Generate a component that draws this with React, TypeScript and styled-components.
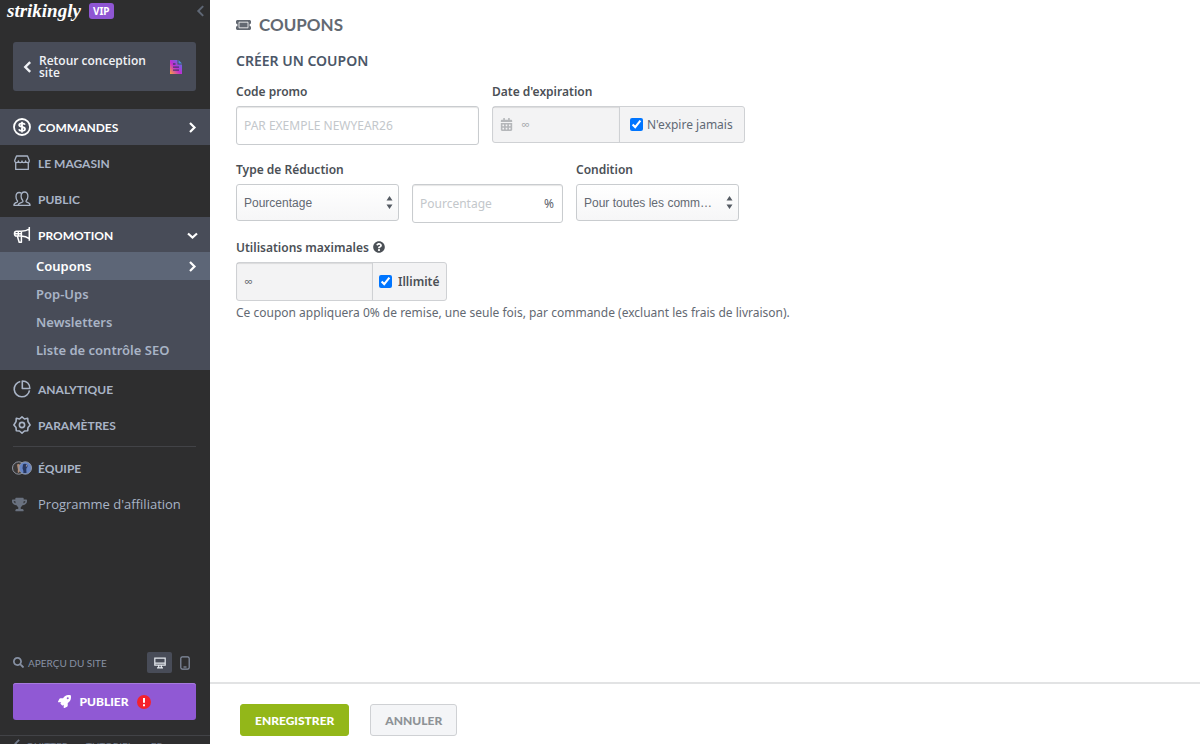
import React from 'react';
import styled, { createGlobalStyle, css } from 'styled-components';
import { FaSearch, FaTrophy, FaRocket, FaQuestionCircle, FaCalendarAlt } from 'react-icons/fa';

const GlobalStyle = createGlobalStyle`
  *, *::before, *::after { box-sizing: border-box; }
  body { margin: 0; background: #fff; color: #4b5056; font-family: 'Noto Sans', sans-serif; font-size: 12px; }
  button, input, select { font: inherit; margin: 0; }
  a { color: inherit; text-decoration: none; }
  svg { display: block; flex: none; }
`;

const brand = css`font-family: Lato, sans-serif;`;

/* ---------- layout ---------- */

const Shell = styled.div`
  display: flex;
  height: 100vh;
  overflow: hidden;
`;

const Sidebar = styled.aside`
  display: flex;
  flex: none;
  flex-direction: column;
  width: 210px;
  background: #2e2e2f;
  color: #a9b4c6;
`;

const Main = styled.main`
  display: flex;
  flex: 1;
  flex-direction: column;
  min-width: 0;
`;

/* ---------- sidebar ---------- */

const SidebarHeader = styled.header`
  display: flex;
  align-items: center;
  height: 22px;
  padding: 0 3px 0 7px;
`;

const Logo = styled.a`
  color: #fff;
  font: italic 700 19px/20px 'Liberation Serif', serif;
`;

const VipBadge = styled.span`
  margin-left: 8px;
  padding: 0 4px;
  border-radius: 3px;
  background: #8f56d3;
  color: #fff;
  font-size: 10px;
  font-weight: 700;
  line-height: 16px;
`;

const CollapseButton = styled.button`
  margin-left: auto;
  padding: 0;
  border: 0;
  background: none;
  color: #5f6775;
`;

const BackLink = styled.a`
  display: flex;
  align-items: center;
  height: 49px;
  margin: 20px 14px 18px 13px;
  padding: 0 14px 0 9px;
  border-radius: 3px;
  background: #484c58;
  color: #f0f2f6;
  font-family: 'Open Sans', sans-serif;
  font-size: 12px;
  font-weight: 600;
  line-height: 12px;
`;

const BackLabel = styled.span`
  flex: 1;
  padding: 0 12px 0 5px;
`;

const Nav = styled.nav`
  display: flex;
  flex-direction: column;
`;

const NavItem = styled.a<{ $active?: boolean }>`
  ${brand}
  display: flex;
  align-items: center;
  gap: 6px;
  height: 36px;
  padding: 0 12px;
  background: ${p => (p.$active ? '#484c58' : 'transparent')};
  color: ${p => (p.$active ? '#fff' : '#a9b4c6')};
  font-size: 12px;
  font-weight: 700;
`;

const NavIcon = styled.span<{ $start?: boolean }>`
  display: flex;
  justify-content: ${p => (p.$start ? 'flex-start' : 'center')};
  width: 20px;
`;

const NavText = styled.span`
  flex: 1;
`;

const PlainText = styled(NavText)`
  font-family: 'Open Sans', sans-serif;
  font-size: 13px;
  font-weight: 400;
`;

const SubNav = styled.div`
  margin: -1px 0 1px;
  padding-bottom: 6px;
  background: #484c58;
`;

const SubItem = styled.a<{ $active?: boolean }>`
  display: flex;
  align-items: center;
  justify-content: space-between;
  height: 28px;
  padding: 0 12px 0 36px;
  background: ${p => (p.$active ? '#5d6677' : 'transparent')};
  color: ${p => (p.$active ? '#fff' : '#a9b4c6')};
  font-size: 13px;
  font-weight: 600;
`;

const Divider = styled.hr`
  width: 183px;
  margin: 3px 13px;
  border: 0;
  border-top: 1px solid #424347;
`;

const SidebarBottom = styled.div`
  margin-top: auto;
`;

const PreviewRow = styled.div`
  ${brand}
  display: flex;
  align-items: center;
  gap: 4px;
  margin: 0 13px 10px;
  color: #8690a3;
  font-size: 10px;
`;

const DeviceButton = styled.button<{ $active?: boolean }>`
  display: grid;
  place-items: center;
  width: 25px;
  height: 21px;
  padding: 0;
  border: 0;
  border-radius: 2px;
  background: ${p => (p.$active ? '#484c58' : 'transparent')};
  color: ${p => (p.$active ? '#e6eaf0' : '#8690a3')};
`;

const Devices = styled.div`
  display: flex;
  margin-left: auto;
`;

const PublishButton = styled.button`
  ${brand}
  display: flex;
  align-items: center;
  justify-content: center;
  gap: 8px;
  width: 183px;
  height: 37px;
  margin: 0 13px 15px;
  padding: 0;
  border: 0;
  border-radius: 3px;
  background: #9059d4;
  box-shadow: inset 0 1px #a67bdd;
  color: #fff;
  font-size: 12px;
  font-weight: 900;
`;

const FooterLinks = styled.footer`
  ${brand}
  display: flex;
  gap: 18px;
  height: 9px;
  padding: 3px 13px 0;
  border-top: 1px solid #424347;
  color: #70798a;
  font-size: 10px;
  line-height: 14px;
`;

const QuitLink = styled.a`
  display: flex;
  gap: 4px;
  height: 14px;
`;

/* ---------- coupon form ---------- */

const Content = styled.form`
  flex: 1;
  padding: 15px 26px;
`;

const PageTitle = styled.h1`
  ${brand}
  display: flex;
  align-items: center;
  gap: 8px;
  margin: 0;
  color: #636972;
  font-size: 17px;
  font-weight: 700;
  line-height: 20px;
`;

const SectionTitle = styled.h2`
  margin: 16px 0 12px;
  color: #4b5768;
  font-size: 14px;
  font-weight: 600;
  line-height: 20px;
`;

const Row = styled.div`
  display: flex;
  align-items: flex-start;
  gap: 13px;
  margin-bottom: 16px;
`;

const Field = styled.div`
  display: flex;
  flex-direction: column;
`;

const Label = styled.label`
  display: flex;
  align-items: center;
  gap: 4px;
  height: 16px;
  margin-bottom: 7px;
  color: #4b5056;
  font-size: 12px;
  font-weight: 600;
`;

const Inline = styled.div`
  display: flex;
  align-items: flex-start;
  gap: 13px;
`;

const TextInput = styled.input<{ $width: number }>`
  width: ${p => p.$width}px;
  height: 39px;
  padding: 0 7px;
  border: 1px solid #c9cccf;
  border-radius: 3px;
  background: #fff;
  box-shadow: inset 0 1px 1px #0000001a;
  color: #4b5056;
  font-size: 12px;
  &::placeholder { color: #c3c7cb; opacity: 1; }
`;

const Overlay = styled.div`
  position: relative;
`;

const Unit = styled.span`
  position: absolute;
  top: 12px;
  right: 9px;
  color: #5b626a;
  font-size: 12px;
  line-height: 16px;
`;

const SelectArrows = styled.svg`
  position: absolute;
  top: 12px;
  right: 6px;
  pointer-events: none;
`;

const Select = styled.select`
  width: 163px;
  height: 37px;
  padding: 0 23px 0 7px;
  overflow: hidden;
  border: 1px solid #c9cccf;
  border-radius: 3px;
  appearance: none;
  background: linear-gradient(#fff, #f6f6f7);
  color: #636972;
  font: 12px 'Liberation Sans', sans-serif;
  text-overflow: ellipsis;
`;

const Group = styled.div<{ $height: number }>`
  display: flex;
  height: ${p => p.$height}px;
  border: 1px solid #cfd1d4;
  border-radius: 3px;
  background: #f3f3f4;
  color: #5b626a;
`;

const GroupInput = styled.div<{ $width: number }>`
  display: flex;
  align-items: center;
  gap: 8px;
  width: ${p => p.$width}px;
  padding: 0 7px;
  border-right: 1px solid #cfd1d4;
  box-shadow: inset 0 1px 1px #0000001a;
  color: #b5b7ba;
`;

const DisabledInput = styled.input<{ $dark?: boolean }>`
  flex: 1;
  min-width: 0;
  padding: 0;
  border: 0;
  background: none;
  color: ${p => (p.$dark ? '#62666b' : '#a6a9ad')};
  font-family: 'Open Sans', sans-serif;
  font-size: 12px;
`;

const CheckLabel = styled.label<{ $strong?: boolean }>`
  display: flex;
  align-items: center;
  gap: ${p => (p.$strong ? 6 : 4)}px;
  padding: ${p => (p.$strong ? '0 7px 0 6px' : '0 11px 0 10px')};
  color: ${p => (p.$strong ? '#4b5056' : '#5f6975')};
  font-weight: ${p => (p.$strong ? 600 : 400)};
`;

const Checkbox = styled.input`
  width: 13px;
  height: 13px;
  accent-color: #0075ff;
`;

const Summary = styled.p`
  margin: -13px 0 0;
  color: #636972;
  font-size: 12px;
  line-height: 18px;
`;

const ActionBar = styled.footer`
  display: flex;
  gap: 21px;
  padding: 20px 30px 8px;
  border-top: 2px solid #e2e3e4;
`;

const ActionButton = styled.button<{ $primary?: boolean }>`
  ${brand}
  height: 32px;
  padding: 0 14px;
  border: 1px solid ${p => (p.$primary ? '#93b719' : '#cfd1d4')};
  border-radius: 3px;
  background: ${p => (p.$primary ? '#93b719' : '#f4f5f7')};
  color: ${p => (p.$primary ? '#fff' : '#8e9296')};
  font-size: 12px;
  font-weight: 900;
`;

/* ---------- icons ---------- */

const Stroke = ({ size = 18, width = 1.5, children }: { size?: number; width?: number; children: React.ReactNode }) => (
  <svg width={size} height={size} viewBox="0 0 18 18" fill="none" stroke="currentColor" strokeWidth={width} strokeLinejoin="round" aria-hidden="true">
    {children}
  </svg>
);

const Chevron = ({ dir, size = 11, width = 2.2 }: { dir: 'left' | 'right' | 'down'; size?: number; width?: number }) => {
  const d = { left: 'M7.5 1 3 5.5 7.5 10', right: 'M3 1 7.5 5.5 3 10', down: 'M1 3.5 5.5 7.5 10 3.5' }[dir];
  return (
    <svg width={size} height={size} viewBox="0 0 11 11" fill="none" stroke="currentColor" strokeWidth={width} aria-hidden="true">
      <path d={d} />
    </svg>
  );
};

const CoinIcon = () => (
  <Stroke width={1.8}>
    <circle cx="9" cy="9" r="8" />
    <path d="M12 6.700c-.5-1-1.600-1.400-3-1.400-1.700 0-2.800.7-2.800 1.800 0 2.700 5.800 1.100 5.800 3.900 0 1.200-1.200 1.900-3 1.900-1.500 0-2.700-.5-3.200-1.500M9 3.700v10.700" />
  </Stroke>
);

const StoreIcon = () => (
  <Stroke width={1.3}>
    <path d="M3.500 2h11l1.800 4.500c0 1.400-.8 2.200-1.900 2.200s-1.800-.8-1.800-1.700c0 .9-.8 1.700-1.800 1.700S9 7.900 9 7c0 .9-.8 1.700-1.800 1.700S5.400 7.900 5.400 7c0 .9-.7 1.700-1.800 1.700S1.700 7.900 1.700 6.500zM2.700 8.700v6.700h12.600V8.700" />
  </Stroke>
);

const PeopleIcon = () => (
  <Stroke width={1.3}>
    <path d="M5.200 15.300h11.900c0-2-1.500-2.500-3.300-3.100-.9-.3-1-1.200-.4-1.900 1-1.100 1.500-2.500 1.500-4.100C14.900 3.400 13.600 2 11.500 2S8.100 3.400 8.100 6.200c0 1.600.5 3 1.500 4.100.6.700.5 1.600-.4 1.900-1.900.6-4 1.100-4 3.100z" />
    <path d="M5 15.300H.9c0-2 .9-2.300 2.700-2.900 1.100-.4 1.200-1.200.6-1.900C3.300 9.500 3 8 3 6.500c0-2.700 1.300-4 3.100-4 .9 0 1.600.2 2.100.7" />
  </Stroke>
);

const MegaphoneIcon = () => (
  <Stroke width={1.5}>
    <path d="M16.300 1v13.800M16.300 3C13.700 4.900 11 5.300 8 5.300H3.500C.8 5.300.8 10 3.500 10H8c3 0 5.700.6 8.300 2.700M8.400 5.300v10.900H6.200L4.300 10M5.300 5.300V10M1.600 7.700h6.800" />
  </Stroke>
);

const PieIcon = () => (
  <Stroke width={1.6}>
    <path d="M7.300 1.500A7.700 7.700 0 1 0 16.500 10.300M9.300 1v7.500h7.500C16.800 4 14 1 9.300 1z" />
  </Stroke>
);

const GearIcon = () => (
  <Stroke width={1.6}>
    <path d="M9 .9l2.500 2.100 3.200-.7.300 3.300L17.100 9 15 11.500l-.3 3.200-3.200.3L9 17.100 6.500 15l-3.200-.3L3 11.500.9 9 3 5.600l.3-3.300 3.200.7z" />
    <circle cx="9" cy="9" r="2.600" />
  </Stroke>
);

const AvatarsIcon = () => (
  <svg width="20" height="14" viewBox="0 0 20 14" aria-hidden="true">
    <circle cx="6.700" cy="7" r="6.200" fill="#3a3838" stroke="#8f96a3" />
    <path d="M5 3.500c1.500-1.200 3.500-.5 3.500 2.500 0 3-.5 5.500-2.500 6-.6-2 .3-3-.3-4.500z" fill="#b08d78" />
    <circle cx="13.300" cy="7" r="6.200" fill="#6684c4" stroke="#8f96a3" />
    <path d="M11 3.500c1.700-1.600 4.800-.6 4.500 1.800-.2 1.500-1.300 1.700-1.200 3.200l.2 3.500h-3.200c.6-2.500-.6-3-.8-4.700z" fill="#27375f" />
    <path d="M14 3.500c1 .3 1 2-.1 2.500z" fill="#d9b9a8" />
  </svg>
);

const PageIcon = () => (
  <svg width="12" height="14" viewBox="0 0 12 14" aria-hidden="true">
    <defs>
      <linearGradient id="page" x1="0" y1="1" x2="1" y2="0">
        <stop offset="0" stopColor="#f7a63c" />
        <stop offset=".45" stopColor="#c42bd0" />
        <stop offset="1" stopColor="#3b86e8" />
      </linearGradient>
    </defs>
    <path d="M0 0h7.500v4.500H12V14H0z" fill="url(#page)" />
    <path d="M8.500 0 12 3.500H8.500z" fill="#4c90dc" />
    <path d="M3 4h2.500M3 7.200h6M3 10.200h6" stroke="#4b3670" strokeWidth="1.300" />
  </svg>
);

const MonitorIcon = () => (
  <svg width="12" height="12" viewBox="0 0 12 12" fill="none" stroke="currentColor" strokeWidth="1.200" aria-hidden="true">
    <path d="M.8 1.200h10.400v7H.8zM1 6.200h10M4.700 8.300v2M7.300 8.300v2M3 10.900h6" />
  </svg>
);

const PhoneIcon = () => (
  <svg width="10" height="14" viewBox="0 0 10 14" fill="none" stroke="currentColor" strokeWidth="1.200" aria-hidden="true">
    <rect x=".8" y=".8" width="8.400" height="12.400" rx="1.600" />
    <path d="M3.500 11h3" />
  </svg>
);

const AlertIcon = () => (
  <svg width="14" height="14" viewBox="0 0 14 14" aria-hidden="true">
    <circle cx="7" cy="7" r="7" fill="#f5222d" />
    <path d="M7 3v4.800M7 9.200v2" stroke="#fff" strokeWidth="2" />
  </svg>
);

const TicketIcon = () => (
  <svg width="15" height="10" viewBox="0 0 15 10" fill="none" aria-hidden="true">
    <path d="M1 0h13l1 1v2.500a1.500 1.500 0 0 0 0 3V9l-1 1H1L0 9V6.500a1.500 1.500 0 0 0 0-3V1z" fill="#636972" />
    <path d="M3 2.200h9v5.600H3z" stroke="#fff" strokeWidth=".8" />
  </svg>
);

const Arrows = () => (
  <SelectArrows width="7" height="13" viewBox="0 0 7 13" fill="#555b63" aria-hidden="true">
    <path d="M3.500 0 6.500 4.500h-6zM3.500 13l-3-4.500h6z" />
  </SelectArrows>
);

/* ---------- page ---------- */

export default function App() {
  return (
    <Shell>
      <GlobalStyle />
      <Sidebar>
        <SidebarHeader>
          <Logo href="#">strikingly</Logo>
          <VipBadge>VIP</VipBadge>
          <CollapseButton type="button" aria-label="Réduire"><Chevron dir="left" size={12} width={1.8} /></CollapseButton>
        </SidebarHeader>
        <BackLink href="#">
          <Chevron dir="left" size={12} />
          <BackLabel>Retour conception site</BackLabel>
          <PageIcon />
        </BackLink>
        <Nav>
          <NavItem href="#" $active><NavIcon><CoinIcon /></NavIcon><NavText>COMMANDES</NavText><Chevron dir="right" /></NavItem>
          <NavItem href="#"><NavIcon><StoreIcon /></NavIcon><NavText>LE MAGASIN</NavText></NavItem>
          <NavItem href="#"><NavIcon><PeopleIcon /></NavIcon><NavText>PUBLIC</NavText></NavItem>
          <NavItem href="#" $active><NavIcon><MegaphoneIcon /></NavIcon><NavText>PROMOTION</NavText><Chevron dir="down" /></NavItem>
          <SubNav>
            <SubItem href="#" $active>Coupons<Chevron dir="right" /></SubItem>
            <SubItem href="#">Pop-Ups</SubItem>
            <SubItem href="#">Newsletters</SubItem>
            <SubItem href="#">Liste de contrôle SEO</SubItem>
          </SubNav>
          <NavItem href="#"><NavIcon><PieIcon /></NavIcon><NavText>ANALYTIQUE</NavText></NavItem>
          <NavItem href="#"><NavIcon><GearIcon /></NavIcon><NavText>PARAMÈTRES</NavText></NavItem>
          <Divider />
          <NavItem href="#"><NavIcon><AvatarsIcon /></NavIcon><NavText>ÉQUIPE</NavText></NavItem>
          <NavItem href="#"><NavIcon $start><FaTrophy size={15} color="#69717f" /></NavIcon><PlainText>Programme d'affiliation</PlainText></NavItem>
        </Nav>
        <SidebarBottom>
          <PreviewRow>
            <FaSearch size={11} />
            APERÇU DU SITE
            <Devices>
              <DeviceButton type="button" $active aria-label="Ordinateur"><MonitorIcon /></DeviceButton>
              <DeviceButton type="button" aria-label="Mobile"><PhoneIcon /></DeviceButton>
            </Devices>
          </PreviewRow>
          <PublishButton type="button"><FaRocket size={13} />PUBLIER<AlertIcon /></PublishButton>
          <FooterLinks>
            <QuitLink href="#"><Chevron dir="left" size={9} />QUITTER</QuitLink>
            <a href="#">TUTORIEL</a>
            <a href="#">FR</a>
          </FooterLinks>
        </SidebarBottom>
      </Sidebar>
      <Main>
        <Content id="coupon">
          <PageTitle><TicketIcon />COUPONS</PageTitle>
          <SectionTitle>CRÉER UN COUPON</SectionTitle>
          <Row>
            <Field>
              <Label htmlFor="code">Code promo</Label>
              <TextInput id="code" $width={243} placeholder="PAR EXEMPLE NEWYEAR26" />
            </Field>
            <Field>
              <Label htmlFor="date">Date d'expiration</Label>
              <Group $height={37}>
                <GroupInput $width={127}>
                  <FaCalendarAlt size={13} />
                  <DisabledInput id="date" disabled defaultValue="∞" />
                </GroupInput>
                <CheckLabel><Checkbox type="checkbox" defaultChecked />N'expire jamais</CheckLabel>
              </Group>
            </Field>
          </Row>
          <Row>
            <Field>
              <Label htmlFor="type">Type de Réduction</Label>
              <Inline>
                <Overlay>
                  <Select id="type"><option>Pourcentage</option></Select>
                  <Arrows />
                </Overlay>
                <Overlay>
                  <TextInput $width={151} placeholder="Pourcentage" aria-label="Pourcentage" />
                  <Unit>%</Unit>
                </Overlay>
              </Inline>
            </Field>
            <Field>
              <Label htmlFor="condition">Condition</Label>
              <Overlay>
                <Select id="condition"><option>Pour toutes les commandes</option></Select>
                <Arrows />
              </Overlay>
            </Field>
          </Row>
          <Row>
            <Field>
              <Label htmlFor="uses">Utilisations maximales<FaQuestionCircle size={12} /></Label>
              <Group $height={39}>
                <GroupInput $width={136}>
                  <DisabledInput id="uses" $dark disabled defaultValue="∞" />
                </GroupInput>
                <CheckLabel $strong><Checkbox type="checkbox" defaultChecked />Illimité</CheckLabel>
              </Group>
            </Field>
          </Row>
          <Summary>Ce coupon appliquera 0% de remise, une seule fois, par commande (excluant les frais de livraison).</Summary>
        </Content>
        <ActionBar>
          <ActionButton type="submit" form="coupon" $primary>ENREGISTRER</ActionButton>
          <ActionButton type="button">ANNULER</ActionButton>
        </ActionBar>
      </Main>
    </Shell>
  );
}
